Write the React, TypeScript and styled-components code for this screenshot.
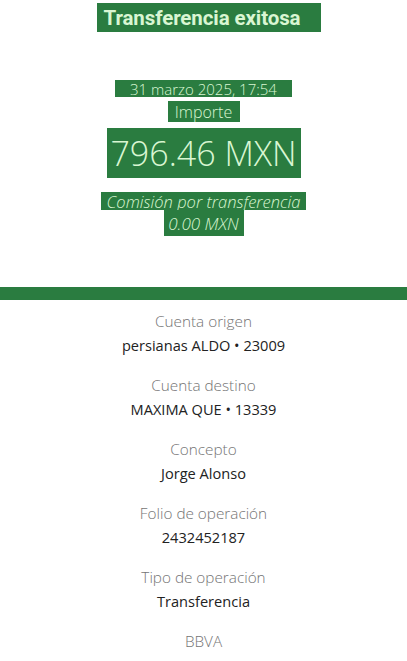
import styled, { createGlobalStyle } from 'styled-components'

const GlobalStyle = createGlobalStyle`
  html, body {
    margin: 0;
    padding: 0;
    background: #ffffff;
  }
  body {
    font-family: 'Open Sans', Roboto, sans-serif;
  }
`

const GREEN = '#2a7c40'
const INK = '#d9f6d2'

type ChipProps = {
  $size: number
  $h: number
  $w: number
  $top: number
  $weight?: number
  $italic?: boolean
}

const Page = styled.div`
  width: 407px;
  min-height: 661px;
  background: #fff;
`

const Header = styled.header`
  display: flex;
  flex-direction: column;
  align-items: center;
`

const Chip = styled.div<ChipProps>`
  display: flex;
  align-items: center;
  justify-content: center;
  box-sizing: border-box;
  margin-top: ${(p) => p.$top}px;
  width: ${(p) => p.$w}px;
  height: ${(p) => p.$h}px;
  background: ${GREEN};
  color: ${INK};
  font-size: ${(p) => p.$size}px;
  font-weight: ${(p) => p.$weight ?? 300};
  font-style: ${(p) => (p.$italic ? 'italic' : 'normal')};
  white-space: nowrap;
`

const Title = styled(Chip)`
  font-family: Roboto, 'Liberation Sans', sans-serif;
  letter-spacing: -0.1px;
  margin-left: 10px;
  justify-content: flex-start;
  padding-left: 7px;
`

const Bar = styled.div`
  margin-top: 51px;
  height: 13px;
  background: ${GREEN};
`

const Details = styled.section`
  display: flex;
  flex-direction: column;
  align-items: center;
  gap: 16px;
  padding-top: 9px;
`

const Item = styled.div`
  display: flex;
  flex-direction: column;
  align-items: center;
`

const Label = styled.div`
  font-size: 15.3px;
  font-weight: 300;
  line-height: 24px;
  color: #747474;
`

const Value = styled.div`
  font-size: 14.6px;
  font-weight: 400;
  line-height: 24px;
  color: #222;
`

const details = [
  { label: 'Cuenta origen', value: 'persianas ALDO • 23009' },
  { label: 'Cuenta destino', value: 'MAXIMA QUE • 13339' },
  { label: 'Concepto', value: 'Jorge Alonso' },
  { label: 'Folio de operación', value: '2432452187' },
  { label: 'Tipo de operación', value: 'Transferencia' },
  { label: 'BBVA', value: '' },
]

export default function App() {
  return (
    <Page>
      <GlobalStyle />
      <Header>
        <Title $top={3} $h={29} $w={224} $size={20.5} $weight={700}>
          Transferencia exitosa
        </Title>
        <Chip $top={48} $h={17} $w={177} $size={15}>
          31 marzo 2025, 17:54
        </Chip>
        <Chip $top={4} $h={21} $w={72} $size={16}>
          Importe
        </Chip>
        <Chip $top={6} $h={50} $w={194} $size={34}>
          796.46 MXN
        </Chip>
        <Chip $top={14} $h={18} $w={205} $size={16.5} $italic>
          Comisión por transferencia
        </Chip>
        <Chip $top={0} $h={26} $w={80} $size={17} $italic>
          0.00 MXN
        </Chip>
      </Header>
      <Bar />
      <Details>
        {details.map((d) => (
          <Item key={d.label}>
            <Label>{d.label}</Label>
            {d.value && <Value>{d.value}</Value>}
          </Item>
        ))}
      </Details>
    </Page>
  )
}
